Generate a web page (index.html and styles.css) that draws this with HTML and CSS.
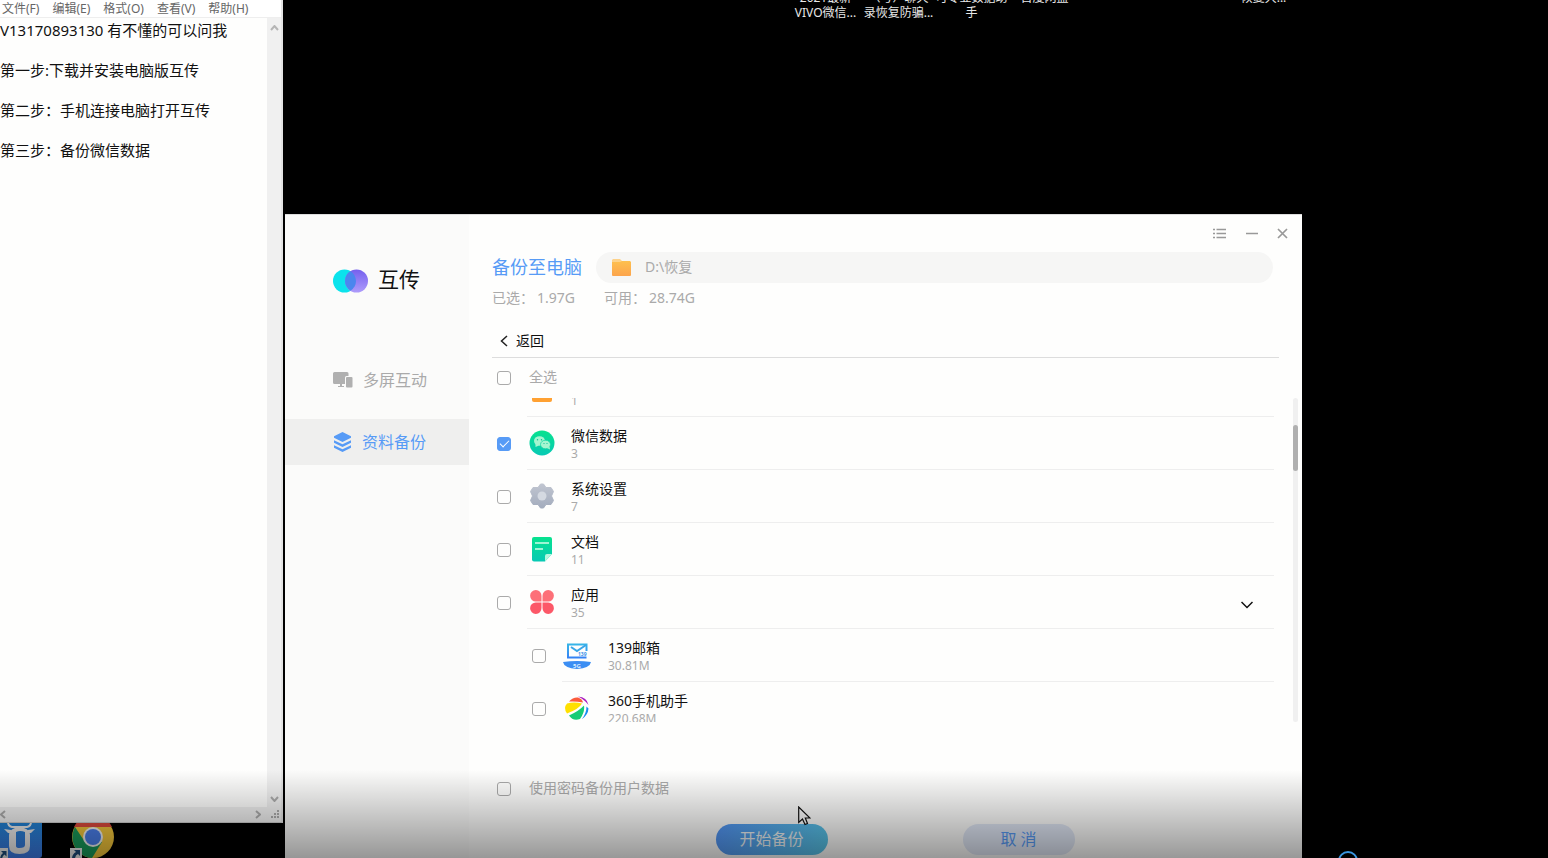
FILE: index.html
```html
<!DOCTYPE html>
<html lang="zh-CN">
<head>
<meta charset="utf-8">
<title>互传</title>
<link rel="stylesheet" href="styles.css">
</head>
<body>
<div class="desktop">
  <div class="shortcuts">
    <span>2021最新<br>VIVO微信...</span>
    <span>（号）聊天<br>录恢复防骗...</span>
    <span>可专业数据助<br>手</span>
    <span>百度网盘</span>
    <span></span>
    <span></span>
    <span>恢复大...</span>
  </div>

  <svg class="app-icon app-bull" width="43" height="38" viewBox="0 0 43 38">
    <defs><linearGradient id="bull" x1="0" y1="0" x2="0" y2="1"><stop offset="0" stop-color="#1b83cf"/><stop offset="1" stop-color="#3f7be8"/></linearGradient></defs>
    <rect x="-5" y="-6" width="47" height="42" rx="3" fill="url(#bull)"/>
    <path d="M8 0Q8 4 12 5H27Q31 4 31 0" fill="none" stroke="#eee" stroke-width="2"/>
    <path d="M4 7L11 8L12 11L8 11ZM35 7L28 8L27 11L31 11Z" fill="#eee"/>
    <path d="M15 6Q19.500 4 24 6Q30 8 30 13V24Q30 32 19.500 32Q9 32 9 24V13Q9 8 15 6ZM16 10V24Q16 26 19.500 26Q25 26 25 23V10Q20 8 16 10Z" fill="#eee" fill-rule="evenodd"/>
    <rect x="-4" y="26" width="12" height="12" fill="#eee"/><path d="M1 29H6.500V34.500L4.500 32.500Q2 34 2 38H0Q0 33 3 31Z" fill="#1f4c7c"/>
  </svg>
  <svg class="app-icon app-chrome" width="48" height="38" viewBox="0 0 48 38">
    <circle cx="23" cy="15" r="21" fill="#f3c63b"/>
    <path d="M4 5A21 21 0 0 1 42 5H23Z" fill="#dc4a3c"/>
    <path d="M5 5A21 21 0 0 0 22 36L32 20L23 15L15 20Z" fill="#199b5a"/>
    <circle cx="23" cy="15" r="10" fill="#f4f4f4"/><circle cx="23" cy="15" r="8" fill="#4a80ee"/>
    <rect x="0" y="26" width="12" height="12" fill="#eee"/><path d="M4 28H10V34L8 32Q5 33 5 37H2Q2 32 6 30Z" fill="#1f4c7c"/>
  </svg>

  <section class="notepad" aria-label="记事本">
    <nav class="menu">
      <button>文件(F)</button><button>编辑(E)</button><button>格式(O)</button><button>查看(V)</button><button>帮助(H)</button>
    </nav>
    <div class="note-body">
      <textarea class="note" aria-label="文本" spellcheck="false">V13170893130 有不懂的可以问我

第一步:下载并安装电脑版互传

第二步：手机连接电脑打开互传

第三步：备份微信数据</textarea>
      <div class="vbar">
        <svg width="9" height="6" viewBox="0 0 9 6"><path d="M1 5L4.500 1L8 5" fill="none" stroke="#b5b5b5" stroke-width="2"/></svg>
        <svg width="9" height="6" viewBox="0 0 9 6"><path d="M1 1L4.500 5L8 1" fill="none" stroke="#aaa" stroke-width="2"/></svg>
      </div>
    </div>
    <div class="hbar">
      <svg width="6" height="9" viewBox="0 0 6 9"><path d="M5 1L1 4.500L5 8" fill="none" stroke="#aaa" stroke-width="2"/></svg>
      <svg width="6" height="9" viewBox="0 0 6 9"><path d="M1 1L5 4.500L1 8" fill="none" stroke="#aaa" stroke-width="2"/></svg>
      <svg width="9" height="9" viewBox="0 0 9 9" fill="#aaa"><path d="M6 0h2v2h-2zM3 3h2v2h-2zM6 3h2v2h-2zM0 6h2v2h-2zM3 6h2v2h-2zM6 6h2v2h-2z"/></svg>
    </div>
  </section>

  <section class="window" aria-label="互传">
    <aside class="sidebar">
      <div class="brand">
        <svg width="35" height="24" viewBox="0 0 35 24">
          <defs><linearGradient id="pu" x1="0" y1="0" x2="0" y2="1"><stop offset="0" stop-color="#7560ee"/><stop offset="1" stop-color="#ae9cfb"/></linearGradient></defs>
          <circle cx="11.500" cy="12" r="11.500" fill="#0be3ec"/><circle cx="23.500" cy="12" r="11.500" fill="url(#pu)"/>
          <path d="M17.500 2.200A11.500 11.500 0 0 1 17.500 21.800A11.500 11.500 0 0 1 17.500 2.200Z" fill="#4b86ee"/>
        </svg>
        <span>互传</span>
      </div>
      <a class="nav" href="#screens">
        <svg width="20" height="16" viewBox="0 0 20 16" fill="#b0b0b0"><path d="M1.500 0H14A1.500 1.500 0 0 1 15.500 1.500V4H13.500A1.500 1.500 0 0 0 12 5.500V12H1.500A1.500 1.500 0 0 1 0 10.500V1.500A1.500 1.500 0 0 1 1.500 0ZM7 12H9V14H11V15H5V14H7Z"/><rect x="13" y="5" width="6.500" height="10.500" rx="1"/></svg>
        <span>多屏互动</span>
      </a>
      <a class="nav active" href="#backup">
        <svg width="19" height="20" viewBox="0 0 19 20" fill="#579bf6"><path d="M9.500 0L18 4.200V5.800L9.500 10L1 5.800V4.200Z"/><path d="M1 8.200L9.500 12.200L18 8.200V10.700L9.500 15L1 10.700Z"/><path d="M1 13.200L9.500 17.200L18 13.200V15.700L9.500 20L1 15.700Z"/></svg>
        <span>资料备份</span>
      </a>
    </aside>

    <main class="main">
      <div class="titlebar">
        <button aria-label="菜单"><svg width="14" height="11" viewBox="0 0 14 11"><path d="M3.500 1.500H13M3.500 5.500H13M3.500 9.500H13M0 1.500H2M0 5.500H2M0 9.500H2" stroke="#999" stroke-width="1.300"/></svg></button>
        <button aria-label="最小化"><svg width="12" height="11" viewBox="0 0 12 11"><path d="M0 5.500H12" stroke="#999" stroke-width="1.500"/></svg></button>
        <button aria-label="关闭"><svg width="11" height="11" viewBox="0 0 11 11"><path d="M1 1L10 10M10 1L1 10" stroke="#999" stroke-width="1.700"/></svg></button>
      </div>
      <header class="target">
        <h1>备份至电脑</h1>
        <label class="path">
          <svg width="19" height="17" viewBox="0 0 19 17"><defs><linearGradient id="fo" x1="0" y1="0" x2="0" y2="1"><stop offset="0" stop-color="#fec04f"/><stop offset="1" stop-color="#fca44c"/></linearGradient></defs><path d="M1 0H8L10 2H17Q18 2 18 4V9H0V1Z" fill="#fdd28a"/><path d="M0 3H8L10 2H18L19 3V16Q19 17 18 17H1Q0 17 0 16Z" fill="url(#fo)"/></svg>
          <input type="text" value="D:\恢复" aria-label="备份路径">
        </label>
      </header>
      <div class="stats"><span>已选：</span><span class="value">1.97G</span><span>可用：</span><span class="value">28.74G</span></div>
      <div class="back"><button><svg width="8" height="12" viewBox="0 0 8 12"><path d="M7 1L1.500 6L7 11" fill="none" stroke="#222" stroke-width="1.500"/></svg>返回</button></div>
      <label class="all"><input class="check" type="checkbox"><span>全选</span></label>

      <div class="scroller">
        <ul class="list">
          <li class="row first">
            <input class="check" type="checkbox" aria-label="1">
            <div class="cell"><svg class="pic" width="30" height="26" viewBox="0 0 30 26"><rect x="5" y="1" width="20" height="24" rx="2" fill="#ffa132"/></svg>
            <div class="text"><span class="name">&nbsp;</span><span class="count">1</span></div></div>
          </li>
          <li class="row">
            <input class="check" type="checkbox" id="wx" checked>
            <div class="cell"><svg class="pic" width="30" height="26" viewBox="0 0 30 26"><defs><linearGradient id="g" x1="0" y1="0" x2="0" y2="1"><stop offset="0" stop-color="#07e28e"/><stop offset="1" stop-color="#08c9b5"/></linearGradient></defs><circle cx="15" cy="13" r="12.500" fill="url(#g)"/><path d="M8.500 14L8.500 17L12 15.500Z" fill="#a5f5d0"/><ellipse cx="12.500" cy="11" rx="5.500" ry="4.800" fill="#a5f5d0"/><ellipse cx="18.500" cy="14.500" rx="5" ry="4.300" fill="#a5f5d0" stroke="#07d5a1" stroke-width=".7"/><path d="M20 18L23 19.500L22.500 16.500Z" fill="#a5f5d0"/><g fill="#07bd93"><circle cx="10.500" cy="9.800" r=".7"/><circle cx="14.500" cy="9.800" r=".7"/><circle cx="17" cy="13.500" r=".6"/><circle cx="20" cy="13.500" r=".6"/></g></svg>
            <label class="text" for="wx"><span class="name">微信数据</span><span class="count">3</span></label></div>
          </li>
          <li class="row">
            <input class="check" type="checkbox" id="sys">
            <div class="cell"><svg class="pic" width="30" height="26" viewBox="0 0 30 26"><defs><linearGradient id="ge" x1="0" y1="0" x2="0" y2="1"><stop offset="0" stop-color="#c0c5d0"/><stop offset="1" stop-color="#a3acbd"/></linearGradient></defs><path d="M13.500 1H16.500L19 4.500L24 4.500L26.500 8.500L24.500 13L26.500 17.500L24 21.500L19 21.500L16.500 25H13.500L11 21.500L6 21.500L3.500 17.500L5.500 13L3.500 8.500L6 4.500L11 4.500Z" fill="url(#ge)" stroke="url(#ge)" stroke-linejoin="round"/><circle cx="15" cy="13" r="4.500" fill="#d4d9e1"/></svg>
            <label class="text" for="sys"><span class="name">系统设置</span><span class="count">7</span></label></div>
          </li>
          <li class="row">
            <input class="check" type="checkbox" id="doc">
            <div class="cell"><svg class="pic" width="30" height="26" viewBox="0 0 30 26"><path d="M7 1H23Q25 1 25 3V18L18 25.500H7Q5 25.500 5 23.500V3Q5 1 7 1Z" fill="url(#g)"/><path d="M18 25.500V20Q18 18 20 18H25Z" fill="#b8f7df"/><path d="M8 7H22M8 13H16" stroke="#9df5d4" stroke-width="2"/></svg>
            <label class="text" for="doc"><span class="name">文档</span><span class="count">11</span></label></div>
          </li>
          <li class="row">
            <input class="check" type="checkbox" id="apps">
            <div class="cell"><svg class="pic" width="30" height="26" viewBox="0 0 30 26"><g fill="#fd7078"><path d="M14.500 12.500H9A5.700 5.700 0 1 1 14.500 7Z"/><path d="M15.500 12.500H21A5.700 5.700 0 1 0 15.500 7Z"/></g><g fill="#fc5868"><path d="M14.500 13.500H9A5.700 5.700 0 1 0 14.500 19Z"/><path d="M15.500 13.500H21A5.700 5.700 0 1 1 15.500 19Z"/></g></svg>
            <label class="text" for="apps"><span class="name">应用</span><span class="count">35</span></label>
            <button class="fold" aria-label="展开"><svg width="12" height="8" viewBox="0 0 12 8"><path d="M.5 1L6 6.500L11.500 1" fill="none" stroke="#111" stroke-width="1.500"/></svg></button></div>
          </li>
          <li class="row sub">
            <input class="check" type="checkbox" id="mail">
            <div class="cell"><svg class="pic" width="30" height="28" viewBox="0 0 30 28"><defs><linearGradient id="ma" x1="0" y1="0" x2="0" y2="1"><stop offset="0" stop-color="#37b5e8"/><stop offset="1" stop-color="#3583f5"/></linearGradient></defs><path d="M24.500 10V3.500H6V16.500H24.500" fill="none" stroke="url(#ma)" stroke-width="2"/><path d="M9 6L15 10L24 4" fill="none" stroke="#3aa6e8" stroke-width="2"/><text x="16" y="15" font-size="5" font-weight="700" fill="#3f92e8" font-family="Noto Sans">139</text><path d="M1 21Q15 19 29 21Q28 27 15 28Q2 27 1 21Z" fill="#3c8ef3"/><text x="11" y="27" font-size="6" font-weight="700" fill="#d9edff" font-family="Noto Sans">5G</text></svg>
            <label class="text" for="mail"><span class="name">139邮箱</span><span class="count">30.81M</span></label></div>
          </li>
          <li class="row sub">
            <input class="check" type="checkbox" id="q360">
            <div class="cell"><svg class="pic" width="30" height="26" viewBox="0 0 30 26"><path d="M7 6.500Q11 2 16 2.500Q20.500 4 21 7.500Q14 6 7 6.500Z" fill="#fb5b3c"/><path d="M16 1.500Q25 2 26.500 10Q22 4 16 1.500Z" fill="#a91cc1"/><path d="M5 8.500Q12 6.500 20 8.500Q17 14 5 18.500Q1 13 5 8.500Z" fill="#ffe000"/><path d="M7 20.500Q17 16 22 10.500Q23 17 18 24Q11 26.500 7 20.500Z" fill="#15cc76"/><path d="M24.500 11.500L26.500 13.500Q26 20 20 24Q24.500 18 24.500 11.500Z" fill="#168cf1"/></svg>
            <label class="text" for="q360"><span class="name">360手机助手</span><span class="count">220.68M</span></label></div>
          </li>
        </ul>
        <div class="track"><div class="thumb"></div></div>
      </div>

      <footer class="footer">
        <label class="all secret"><input class="check" type="checkbox"><span>使用密码备份用户数据</span></label>
        <div class="actions"><button class="start">开始备份</button><button class="cancel">取 消</button></div>
      </footer>
    </main>
  </section>

  <svg class="cursor" width="13" height="20" viewBox="0 0 13 20"><path d="M.7 1V16.500L4.500 13L7 18.500L9.500 17.500L7.300 12H12Z" fill="#fff" stroke="#111" stroke-width="1.200"/></svg>
  <div class="shade"></div>
  <div class="ring"></div>
</div>
</body>
</html>
```
FILE: styles.css
```css
* { box-sizing: border-box; }
body {
  margin: 0;
  background: #000;
  font-family: "Noto Sans", "Noto Sans CJK SC", sans-serif;
  font-size: 14px;
  color: #111;
}
button { border: 0; padding: 0; background: none; font: inherit; color: inherit; }
svg { display: block; flex: none; }
.desktop { position: relative; height: 100vh; overflow: hidden; }

.shortcuts {
  position: absolute;
  top: -10px;
  left: 789px;
  display: grid;
  grid-template-columns: repeat(7, 73px);
  font-size: 12px;
  line-height: 15px;
  color: #e8e8e8;
  text-align: center;
  white-space: nowrap;
}
.app-icon { position: absolute; top: 822px; }
.app-bull { left: 0; }
.app-chrome { left: 70px; }

.notepad {
  position: absolute;
  top: 0;
  left: 0;
  bottom: 35px;
  width: 283px;
  display: flex;
  flex-direction: column;
  background: #f0f0f0;
  border-right: 2px solid #e4e4e4;
  border-bottom: 1px solid #ccc;
}
.menu {
  display: flex;
  gap: 13px;
  height: 18px;
  padding-left: 2px;
  background: #fff;
  border-bottom: 1px solid #eee;
  font-size: 12px;
  line-height: 17px;
  color: #666;
}
.note-body { flex: 1; display: flex; min-height: 0; }
.note {
  flex: 1;
  min-width: 0;
  padding: 2px 0 0;
  border: 0;
  outline: 0;
  resize: none;
  overflow: hidden;
  background: #fefefd;
  font: inherit;
  font-size: 15px;
  line-height: 20px;
  color: #111;
}
.vbar {
  width: 14px;
  display: flex;
  flex-direction: column;
  justify-content: space-between;
  align-items: center;
  padding: 7px 0 5px;
}
.hbar { height: 15px; display: flex; align-items: center; gap: 10px; padding-right: 1px; }
.hbar svg:first-child { margin-right: auto; }

.window {
  position: absolute;
  top: 214px;
  left: 285px;
  right: 246px;
  bottom: 0;
  display: flex;
  background: #fefefd;
  border-top: 1px solid #ddd;
}
.sidebar { width: 184px; background: #fbfbfa; }
.brand {
  display: flex;
  align-items: center;
  gap: 10px;
  height: 32px;
  margin: 50px 0 60px;
  padding-left: 48px;
  font-size: 21px;
  line-height: 28px;
}
.brand span { padding-bottom: 4px; }
.nav {
  display: flex;
  align-items: center;
  gap: 10px;
  height: 46px;
  margin-bottom: 16px;
  padding-left: 48px;
  font-size: 16px;
  line-height: 24px;
  color: #aaa;
  text-decoration: none;
}
.nav.active { background: #efefee; color: #579bf6; }

.main {
  flex: 1;
  min-width: 0;
  display: flex;
  flex-direction: column;
  padding: 0 4px 0 23px;
}
.titlebar {
  display: flex;
  justify-content: flex-end;
  align-items: center;
  gap: 19px;
  height: 37px;
  padding-right: 10px;
}
.target { display: flex; align-items: center; gap: 14px; padding-right: 25px; }
h1 { margin: 0; font-size: 18px; line-height: 31px; font-weight: 400; color: #579bf6; }
.path {
  flex: 1;
  display: flex;
  align-items: center;
  gap: 14px;
  height: 31px;
  padding: 0 16px;
  border-radius: 16px;
  background: #f6f6f5;
}
.path input {
  flex: 1;
  min-width: 0;
  padding: 0 0 3px;
  border: 0;
  outline: 0;
  background: none;
  font: inherit;
  color: #aaa;
}
.stats { display: flex; line-height: 30px; color: #aaa; }
.stats .value { margin: 0 29px 0 3px; }
.back {
  height: 45px;
  margin-right: 19px;
  padding: 16px 0 0 8px;
  border-bottom: 1px solid #ddd;
}
.back button { display: flex; align-items: center; gap: 8px; line-height: 24px; }
.all {
  display: flex;
  align-items: center;
  gap: 18px;
  height: 40px;
  padding-left: 5px;
  line-height: 20px;
  color: #aaa;
}
.all span { padding-bottom: 2px; }
.check {
  appearance: none;
  flex: none;
  display: grid;
  place-items: center;
  width: 14px;
  height: 14px;
  margin: 0;
  border: 1px solid #aaa;
  border-radius: 3px;
}
.check:checked { background: #579bf6; border-color: #579bf6; }
.check:checked::after {
  content: "";
  width: 8px;
  height: 4px;
  margin-bottom: 2px;
  border: solid #fff;
  border-width: 0 0 1px 1px;
  transform: rotate(-45deg);
}

.scroller { flex: 1; display: flex; gap: 19px; min-height: 0; }
.list { flex: 1; margin: 0; padding: 0 0 0 5px; list-style: none; overflow: hidden; }
.row { display: flex; align-items: center; gap: 16px; height: 53px; }
.row.first { margin-top: -34px; }
.row.sub { padding-left: 35px; }
.cell {
  flex: 1;
  display: flex;
  align-items: center;
  gap: 14px;
  height: 53px;
  border-bottom: 1px solid #eee;
}
.sub .cell { gap: 16px; }
.text { display: flex; flex-direction: column; padding-top: 2px; }
.name { line-height: 18px; }
.count { font-size: 12px; line-height: 17px; color: #aaa; }
.fold { margin: 5px 21px 0 auto; }
.track { width: 5px; padding-top: 27px; border-radius: 3px; background: #f0f0f0; }
.thumb { height: 46px; border-radius: 3px; background: #b0b0b0; }

.footer { padding: 56px 0 3px; }
.secret { height: 22px; margin-bottom: 24px; }
.actions { display: flex; justify-content: center; gap: 135px; }
.actions button { width: 112px; height: 31px; border-radius: 16px; font-size: 16px; line-height: 31px; }
.actions .start { background: linear-gradient(100deg, #5295f5, #58c5e8); color: #f2f6f8; }
.actions .cancel { background: #e1e8f6; color: #579bf6; }

.cursor { position: absolute; top: 806px; left: 798px; }
.shade {
  position: absolute;
  left: 0;
  right: 0;
  bottom: 0;
  height: 88px;
  background: linear-gradient(rgba(0, 0, 0, 0), rgba(0, 0, 0, .4));
  pointer-events: none;
}
.ring {
  position: absolute;
  top: 851px;
  left: 1338px;
  width: 20px;
  height: 20px;
  border: 2px solid #3b96e0;
  border-radius: 50%;
}
```
